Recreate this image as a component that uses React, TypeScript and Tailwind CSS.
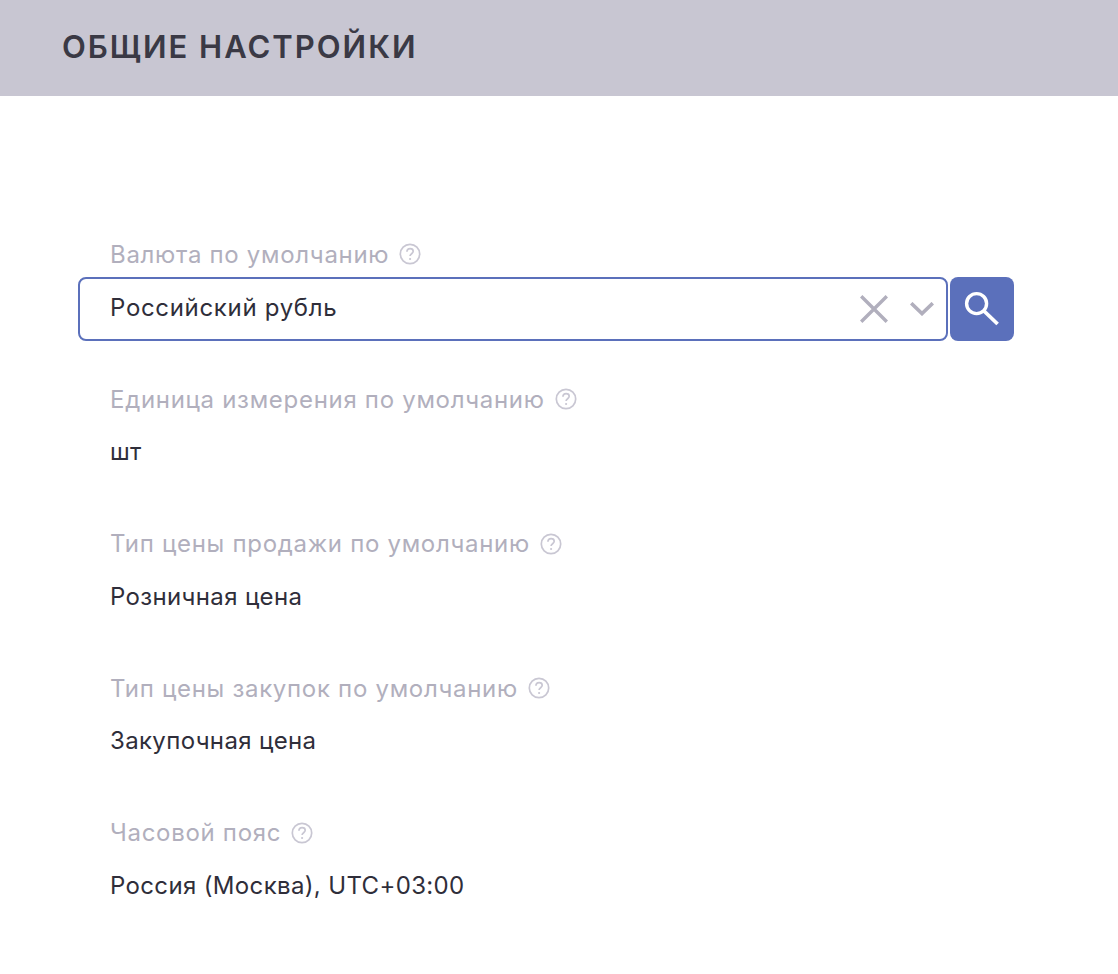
const font = "font-['Inter',sans-serif]";

function Help() {
  return (
    <svg viewBox="0 0 22 22" className="ml-[10px] h-[22px] w-[22px] shrink-0 text-[#c9c7d3]" fill="none" stroke="currentColor">
      <circle cx="11" cy="11" r="9.7" strokeWidth="1.7" />
      <path d="M7.9 8.7c.1-1.9 1.4-3 3.2-3 1.8 0 3.1 1.1 3.1 2.6 0 2.4-3.1 2.4-3.1 4.7" strokeWidth="1.7" />
      <circle cx="11.1" cy="16" r="1.1" fill="currentColor" stroke="none" />
    </svg>
  );
}

function Label({ text }: { text: string }) {
  return (
    <div className="flex h-[32px] items-center pl-[110px] text-[24px] tracking-[0.7px] text-[#b1afbd]">
      <span className="pt-[1px]">{text}</span>
      <Help />
    </div>
  );
}

function Row({ label, value }: { label: string; value: string }) {
  return (
    <div className="h-[144.5px]">
      <Label text={label} />
      <div className="mt-[20px] h-[32px] pl-[110px] text-[24px] leading-[34px] tracking-[0.35px] text-[#2f2e3a]">{value}</div>
    </div>
  );
}

export default function App() {
  return (
    <div className={`min-h-[974px] bg-white ${font}`}>
      <div className="flex h-[96px] items-center bg-[#c8c6d2] pb-[2px] pl-[62px]">
        <h1 className="text-[31px] font-semibold tracking-[2px] text-[#3a3945]">ОБЩИЕ НАСТРОЙКИ</h1>
      </div>
      <div className="pt-[142px]">
        <div className="h-[145px]">
          <Label text="Валюта по умолчанию" />
          <div className="mt-[7px] flex pl-[78px]">
            <div className="flex h-[64px] w-[870px] items-center rounded-[8px] border-2 border-[#5b70bb] pl-[30px] pr-[12px] text-[24px] tracking-[0.68px] text-[#2f2e3a]">
              <span className="flex-1 pb-[2px]">Российский рубль</span>
              <svg viewBox="0 0 28 28" className="h-[28px] w-[28px] text-[#b1afbd]" fill="none" stroke="currentColor" strokeWidth="3.4">
                <path d="M1.2 1.2 26.8 26.8M26.8 1.2 1.2 26.8" />
              </svg>
              <svg viewBox="0 0 24 14" className="ml-[22px] h-[14px] w-[24px] text-[#b1afbd]" fill="none" stroke="currentColor" strokeWidth="3.6">
                <path d="M1.2 1.2 12 11.6 22.8 1.2" />
              </svg>
            </div>
            <button className="ml-[2px] flex h-[64px] w-[64px] items-center justify-center rounded-[8px] bg-[#5b70bb] text-white">
              <svg viewBox="0 0 36 36" className="h-[36px] w-[36px]" fill="none" stroke="currentColor" strokeWidth="3.4">
                <circle cx="12.6" cy="12.6" r="10" />
                <path d="M20 20 33.6 33" strokeWidth="3.8" />
              </svg>
            </button>
          </div>
        </div>
        <Row label="Единица измерения по умолчанию" value="шт" />
        <Row label="Тип цены продажи по умолчанию" value="Розничная цена" />
        <Row label="Тип цены закупок по умолчанию" value="Закупочная цена" />
        <Row label="Часовой пояс" value="Россия (Москва), UTC+03:00" />
      </div>
    </div>
  );
}
